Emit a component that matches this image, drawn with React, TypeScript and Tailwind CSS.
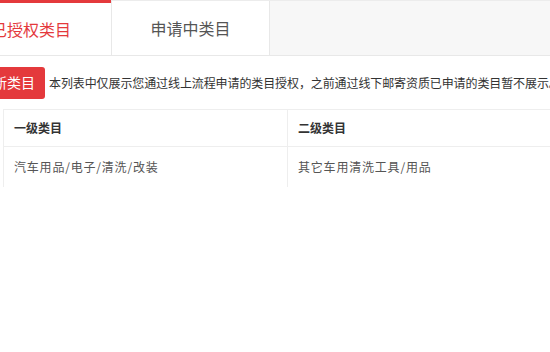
export default function App() {
  const font = { fontFamily: '"Noto Sans CJK SC", "Liberation Sans", sans-serif' };
  return (
    <div className="w-[550px] h-[352px] overflow-hidden bg-white" style={font}>
      <div className="ml-[-49px] w-[650px]">
        <div className="flex h-[56px] bg-[#f7f7f7] border-t border-[#ececec] border-b border-b-[#e8e8e8]">
          <div className="w-[160px] -mt-px bg-white border-t-[3px] border-[#e4393c] flex items-center justify-center text-[16px] text-[#e4393c]">
            已授权类目
          </div>
          <div className="w-[159px] bg-white border-l border-r border-[#e8e8e8] flex items-center justify-center text-[16px] text-[#555]">
            申请中类目
          </div>
        </div>
        <div className="flex items-center h-[53px] pl-[4px]">
          <div className="h-[32px] px-[10px] ml-[-45px] w-[135px] rounded-[3px] bg-[#e4393c] text-white text-[14px] flex items-center justify-end pr-[10px]">
            添加新类目
          </div>
          <div className="ml-[4px] text-[12px] text-[#333] whitespace-nowrap tracking-[-0.1px]">
            本列表中仅展示您通过线上流程申请的类目授权，之前通过线下邮寄资质已申请的类目暂不展示。
          </div>
        </div>
        <div className="ml-[52px] border-l border-t border-[#eee] text-[12px]">
          <div className="flex h-[37px] items-center border-b border-[#eee] font-bold text-[#333]">
            <div className="w-[283px] pl-[10px]">一级类目</div>
            <div className="border-l border-[#eee] h-full flex items-center pl-[10px]">二级类目</div>
          </div>
          <div className="flex h-[40px] items-center text-[#555] tracking-[0.8px]">
            <div className="w-[283px] pl-[10px]">汽车用品/电子/清洗/改装</div>
            <div className="border-l border-[#eee] h-full flex items-center pl-[10px]">其它车用清洗工具/用品</div>
          </div>
        </div>
      </div>
    </div>
  );
}
